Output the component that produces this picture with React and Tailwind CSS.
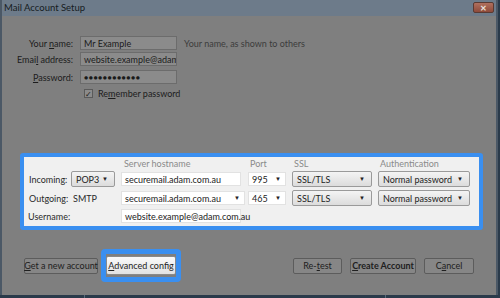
import React from 'react';

const font = { fontFamily: 'Lato, "Open Sans", sans-serif' };

function Caret({ className = '' }) {
  return <span className={`text-[6px] leading-none ${className}`}>▼</span>;
}

// dimmed (overlay) input
function DimInput({ children }) {
  return (
    <div className="flex h-[14px] w-[97px] items-center overflow-hidden whitespace-nowrap border border-[#6c6c6c] bg-[#8b8b8b] px-[3px] text-[#1a1a1a]">
      {children}
    </div>
  );
}

function DimButton({ children, className = '' }) {
  return (
    <div className={`flex h-[16px] items-center justify-center whitespace-nowrap rounded-[2px] border border-[#5c5c5c] bg-[#868686] text-[#202020] ${className}`}>
      {children}
    </div>
  );
}

function SelectBtn({ children, w }) {
  return (
    <div className={`flex h-[16px] ${w} items-center justify-between whitespace-nowrap rounded-[2px] border border-[#9a9a9a] bg-gradient-to-b from-[#f4f4f4] to-[#dcdcdc] pl-[4px] pr-[6px] text-[#222]`}>
      <span>{children}</span>
      <Caret />
    </div>
  );
}

function TextBox({ children, w, caret }) {
  return (
    <div className={`flex h-[14px] ${w} items-center justify-between border border-[#e2e2e2] bg-white pl-[3px] pr-[4px] text-[#222]`}>
      <span className="whitespace-nowrap">{children}</span>
      {caret && <Caret />}
    </div>
  );
}

export default function App() {
  return (
    <div className="flex h-[298px] w-[500px] flex-col overflow-hidden whitespace-nowrap bg-[#2a3a4a] text-[9px] leading-none" style={font}>
      <div className="flex h-[295px] w-[498px] flex-col border-l-2 border-r-2 border-[#4b5866]">
        {/* title bar */}
        <div className="flex h-[16px] items-center justify-between bg-[#6d7b8a] pl-[2px] pr-[2px]">
          <span className="text-[9.5px] text-[#161c22]">Mail Account Setup</span>
          <div className="mb-[1px] flex h-[11px] w-[21px] items-center justify-center rounded-[2px] border border-[#5a3a32] bg-gradient-to-b from-[#b0705e] to-[#8e4a3a] text-[8px] font-bold text-[#e8e0dc]">
            ✕
          </div>
        </div>

        {/* body */}
        <div className="flex flex-1 flex-col bg-[#7f7f7f] text-[#1c1c1c]">
          {/* identity fields */}
          <div className="mt-[20px] flex flex-col gap-[2px]">
            <div className="flex items-center">
              <span className="w-[71px] text-right">Your <u>n</u>ame:</span>
              <div className="ml-[7px]"><DimInput>Mr Example</DimInput></div>
              <span className="ml-[7px] text-[#3c3c3c]">Your name, as shown to others</span>
            </div>
            <div className="flex items-center">
              <span className="w-[71px] text-right">Emai<u>l</u> address:</span>
              <div className="ml-[7px]"><DimInput>website.example@adam.c</DimInput></div>
            </div>
            <div className="mt-[2px] flex items-center">
              <span className="w-[71px] text-right"><u>P</u>assword:</span>
              <div className="ml-[7px]"><DimInput><span className="text-[7px] tracking-[0.5px]">●●●●●●●●●●●●</span></DimInput></div>
            </div>
            <div className="mt-[3px] flex items-center">
              <div className="ml-[82px] flex h-[9px] w-[9px] items-center justify-center border border-[#5a5a5a] bg-[#8b8b8b] text-[8px] text-[#1a1a1a]">✓</div>
              <span className="ml-[5px]">Re<u>m</u>ember password</span>
            </div>
          </div>

          {/* highlighted server settings */}
          <div className="ml-[18px] mt-[55px] w-[463px] rounded-[3px] border-[4px] border-[#3a8ff0] bg-[#f0f0f0] pb-[3px] pt-[2px] text-[#2a2a2a]">
            <div className="grid grid-cols-[47px_50px_127px_44px_86px_92px] items-center gap-y-[3px]">
              <span />
              <span />
              <span className="pl-[3px] text-[#8a8a8a]">Server hostname</span>
              <span className="pl-[2px] text-[#8a8a8a]">Port</span>
              <span className="pl-[2px] text-[#8a8a8a]">SSL</span>
              <span className="pl-[2px] text-[#8a8a8a]">Authentication</span>

              <span className="pl-[5px]">Incoming:</span>
              <SelectBtn w="w-[44px]">POP3</SelectBtn>
              <TextBox w="w-[120px]">securemail.adam.com.au</TextBox>
              <TextBox w="w-[38px]" caret>995</TextBox>
              <SelectBtn w="w-[80px]">SSL/TLS</SelectBtn>
              <SelectBtn w="w-[92px]">Normal password</SelectBtn>

              <span className="pl-[5px]">Outgoing:</span>
              <span className="pl-[2px]">SMTP</span>
              <TextBox w="w-[124px]" caret>securemail.adam.com.au</TextBox>
              <TextBox w="w-[38px]" caret>465</TextBox>
              <SelectBtn w="w-[80px]">SSL/TLS</SelectBtn>
              <SelectBtn w="w-[92px]">Normal password</SelectBtn>

              <span className="pl-[4px]">Username:</span>
              <span />
              <TextBox w="w-[120px]">website.example@adam.com.au</TextBox>
              <span />
              <span />
              <span />
            </div>
          </div>

          {/* buttons */}
          <div className="mt-[19px] flex items-center">
            <DimButton className="ml-[22px] w-[74px]"><span><u>G</u>et a new account</span></DimButton>
            <div className="ml-[3px] rounded-[4px] border-[5px] border-[#3a8ff0] px-0 py-[2px]">
              <div className="flex h-[19px] w-[70px] items-center justify-center rounded-[2px] border border-[#8a8a8a] bg-gradient-to-b from-[#fafafa] to-[#e2e2e2] text-[#222]">
                <span><u>A</u>dvanced config</span>
              </div>
            </div>
            <DimButton className="ml-[112px] w-[49px] text-[#333]"><span>Re-<u>t</u>est</span></DimButton>
            <DimButton className="ml-[8px] w-[66px] font-bold"><span><u>C</u>reate Account</span></DimButton>
            <DimButton className="ml-[8px] w-[50px] text-[#333]"><span>C<u>a</u>ncel</span></DimButton>
          </div>
        </div>
      </div>
      <div className="flex flex-1 bg-[#2a3a4a]">
        <div className="ml-[84px] w-px bg-[#5a6a7a]" />
        <div className="ml-[300px] w-px bg-[#5a6a7a]" />
      </div>
    </div>
  );
}
